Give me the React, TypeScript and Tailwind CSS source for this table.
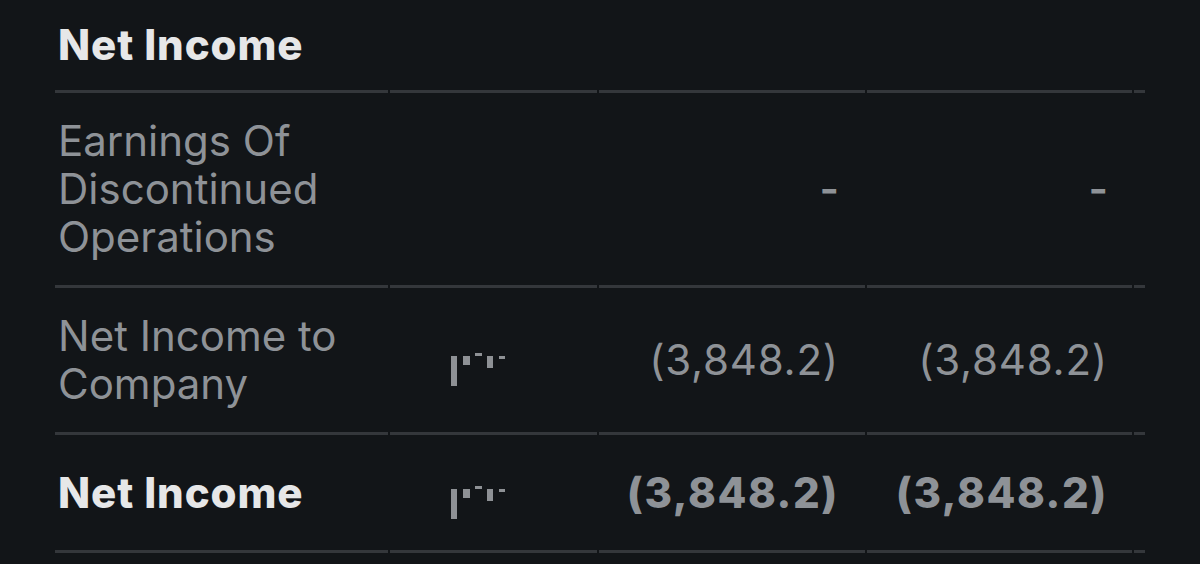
import React from "react";

const gray = "text-[#8e9297]";

function Chart() {
  return (
    <svg width="56" height="60" viewBox="0 0 56 60" className="ml-[61px]">
      <g fill="#8e9195">
        <rect x="0" y="26" width="6" height="30" />
        <rect x="12" y="26" width="7" height="9" />
        <rect x="24" y="23" width="7" height="3" />
        <rect x="36" y="26" width="6" height="12" />
        <rect x="48" y="26" width="6" height="3" />
      </g>
    </svg>
  );
}

type Row = {
  label: string;
  labelClass: string;
  chart?: boolean;
  v1?: string;
  v2?: string;
  valueClass?: string;
  h: string;
};

const rows: Row[] = [
  { label: "Net Income", labelClass: "font-extrabold text-[#e6e7e8] tracking-[0.9px]", h: "h-[93px]" },
  {
    label: "Earnings Of Discontinued Operations",
    labelClass: `font-normal ${gray}`,
    v1: "-",
    v2: "-",
    valueClass: `font-semibold ${gray}`,
    h: "h-[195px]",
  },
  {
    label: "Net Income to Company",
    labelClass: `font-normal ${gray}`,
    chart: true,
    v1: "(3,848.2)",
    v2: "(3,848.2)",
    valueClass: `font-normal ${gray} tracking-[0.8px]`,
    h: "h-[147px]",
  },
  {
    label: "Net Income",
    labelClass: "font-extrabold text-[#e6e7e8] tracking-[0.9px]",
    chart: true,
    v1: "(3,848.2)",
    v2: "(3,848.2)",
    valueClass: `font-extrabold ${gray} tracking-[1.6px]`,
    h: "h-[118px]",
  },
];

export default function App() {
  const cell = "border-b-[3px] border-[#34373b] flex items-center";
  return (
    <div
      className="w-[1200px] h-[564px] bg-[#121518] overflow-hidden"
      style={{ fontFamily: "Inter, 'Noto Sans', sans-serif" }}
    >
      <div className="ml-[55px] grid grid-cols-[333px_207px_266px_265px_11px] gap-x-[2px] text-[42px] leading-[48px]">
        {rows.map((r, i) => (
          <React.Fragment key={i}>
            <div className={`${cell} ${r.h} pl-[3px] pr-[20px]`}>
              <span className={r.labelClass}>{r.label}</span>
            </div>
            <div className={`${cell} ${r.h}`}>{r.chart ? <Chart /> : null}</div>
            <div className={`${cell} ${r.h} justify-end pr-[28px]`}>
              <span className={`${r.valueClass} -mr-[2px]`}>{r.v1}</span>
            </div>
            <div className={`${cell} ${r.h} justify-end pr-[26px]`}>
              <span className={`${r.valueClass} -mr-[2px]`}>{r.v2}</span>
            </div>
            <div className={`${cell} ${r.h}`} />
          </React.Fragment>
        ))}
      </div>
    </div>
  );
}
